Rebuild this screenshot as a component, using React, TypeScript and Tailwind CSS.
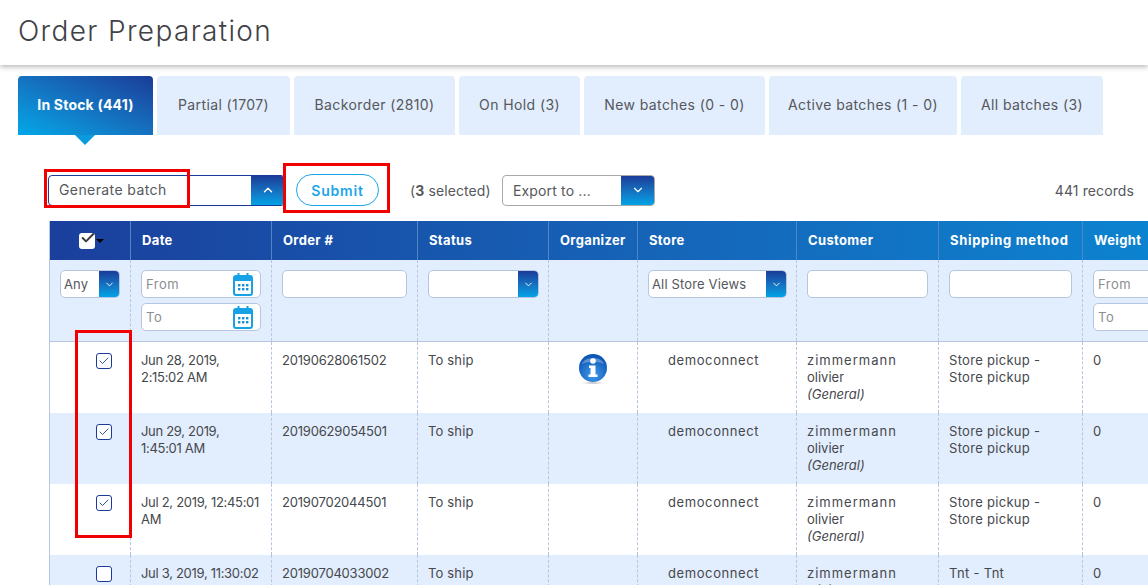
import { Check, ChevronDown, ChevronUp } from 'lucide-react';

const font = "[font-family:Inter,'Liberation_Sans',sans-serif]";

const tabs = [
    { label: 'Partial (1707)', w: 'w-[133px]' },
    { label: 'Backorder (2810)', w: 'w-[161px]' },
    { label: 'On Hold (3)', w: 'w-[121px]' },
    { label: 'New batches (0 - 0)', w: 'w-[181px]' },
    { label: 'Active batches (1 - 0)', w: 'w-[188px]' },
    { label: 'All batches (3)', w: 'w-[142px]' },
];

const rows = [
    { checked: true, date: ['Jun 28, 2019,', '2:15:02 AM'], order: '20190628061502', info: true, ship: ['Store pickup -', 'Store pickup'] },
    { checked: true, date: ['Jun 29, 2019,', '1:45:01 AM'], order: '20190629054501', info: false, ship: ['Store pickup -', 'Store pickup'] },
    { checked: true, date: ['Jul 2, 2019, 12:45:01', 'AM'], order: '20190702044501', info: false, ship: ['Store pickup -', 'Store pickup'] },
    { checked: false, date: ['Jul 3, 2019, 11:30:02', 'AM'], order: '20190704033002', info: false, ship: ['Tnt - Tnt'] },
];

const headers = ['Date', 'Order #', 'Status', 'Organizer', 'Store', 'Customer', 'Shipping method', 'Weight'];

const CalendarIcon = () => (
    <svg width="20" height="24" viewBox="0 0 20 24" className="shrink-0">
        <rect x="1" y="4" width="18" height="19" rx="2" fill="#fff" stroke="#17a2e6" strokeWidth="2" />
        <rect x="1" y="4" width="18" height="5" fill="#17a2e6" />
        <rect x="4.5" y="1" width="2" height="5" fill="#17a2e6" />
        <rect x="13.5" y="1" width="2" height="5" fill="#17a2e6" />
        {[5, 9, 13].map(x => [12, 16].map(y => <rect key={`${x}-${y}`} x={x} y={y} width="2.4" height="2.4" fill="#1b8fd6" />))}
    </svg>
);

const InfoIcon = () => (
    <svg width="30" height="32" viewBox="0 0 30 32">
        <defs>
            <radialGradient id="infoBall" cx="50%" cy="75%" r="70%">
                <stop offset="0%" stopColor="#3f9bea" />
                <stop offset="100%" stopColor="#0b55b5" />
            </radialGradient>
            <radialGradient id="infoShadow">
                <stop offset="0%" stopColor="#999" />
                <stop offset="100%" stopColor="#fff" stopOpacity="0" />
            </radialGradient>
        </defs>
        <ellipse cx="15" cy="30" rx="15" ry="1.6" fill="url(#infoShadow)" />
        <circle cx="15" cy="15" r="14" fill="url(#infoBall)" />
        <path d="M4 11 C7 3 23 3 26 11 C20 8 10 8 4 11Z" fill="#fff" opacity="0.3" />
        <circle cx="15" cy="8" r="2.8" fill="#fff" />
        <path d="M11 12.5h6.5v9h2v2.5h-9v-2.5h2v-6.500h-1.500z" fill="#fff" />
    </svg>
);

const SelectArrow = ({ up = false, wide = false }: { up?: boolean; wide?: boolean }) => (
    <span className={`flex h-full items-center justify-center bg-gradient-to-b from-[#1a3c98] to-[#00a3e6] text-white ${wide ? 'w-[33px]' : 'w-[20px]'}`}>
        {up ? <ChevronUp size={14} strokeWidth={2.5} /> : <ChevronDown size={wide ? 14 : 11} strokeWidth={2} />}
    </span>
);

const FilterSelect = ({ label, w }: { label?: string; w: string }) => (
    <div className={`flex h-[28px] items-center justify-between overflow-hidden rounded-[5px] border border-[#b5c6de] bg-white ${w}`}>
        <span className="truncate pl-[3px] text-[13px] tracking-[0.15px] text-[#55585c]">{label}</span>
        <SelectArrow />
    </div>
);

const FilterInput = ({ placeholder, w, calendar = false }: { placeholder?: string; w: string; calendar?: boolean }) => (
    <div className={`flex h-[28px] items-center justify-between rounded-[5px] border border-[#b5c6de] bg-white pl-[4px] pr-[7px] ${w}`}>
        <span className="text-[13px] tracking-[0.5px] text-[#8a8d91]">{placeholder}</span>
        {calendar && <CalendarIcon />}
    </div>
);

const cellBase = 'border-l border-dashed border-[#b5c6de] align-top';

const App = () => {
    return (
        <div className={`relative h-[585px] w-[1148px] overflow-hidden bg-white text-[#45484c] ${font}`}>
            <header className="flex h-[65px] items-center pb-[3px] pl-[18px] shadow-[0_2px_5px_rgba(0,0,0,0.28)]">
                <h1 className="text-[28px] font-[350] tracking-[1.35px] text-[#3f4246]">Order Preparation</h1>
            </header>

            {/* Tabs */}
            <div className="mt-[11px] flex gap-[4px] pl-[18px]">
                <div className="relative flex h-[59px] w-[135px] items-center justify-center rounded-t-[4px] bg-gradient-to-tr from-[#00a8e8] to-[#1a3c98] pb-[2px] text-[14px] font-bold tracking-[0.2px] text-white">
                    In Stock (441)
                    <span className="absolute -bottom-[10px] left-[57px] h-0 w-0 border-x-[10px] border-t-[10px] border-x-transparent border-t-[#0a9bdf]"></span>
                </div>
                {tabs.map(tab => (
                    <div key={tab.label} className={`flex h-[59px] items-center justify-center rounded-t-[4px] bg-[#e2edfd] pb-[2px] text-[14px] tracking-[0.4px] text-[#55585c] ${tab.w}`}>
                        {tab.label}
                    </div>
                ))}
            </div>

            {/* Toolbar */}
            <div className="mt-[39px] flex h-[32px] items-center pl-[48px] pr-[14px]">
                <div className="flex h-[31px] w-[237px] items-center justify-between overflow-hidden rounded-[4px] border border-[#1a3c98] bg-white">
                    <span className="pb-[2px] pl-[10px] text-[14px] tracking-[0.4px] text-[#55585c]">Generate batch</span>
                    <SelectArrow up wide />
                </div>
                <button className="ml-[11px] h-[32px] w-[83px] rounded-full border border-[#1ba6e8] text-[14px] font-semibold tracking-[0.8px] text-[#1ba6e8]">Submit</button>
                <span className="ml-[31px] w-[92px] whitespace-nowrap text-[14px] tracking-[0.1px] text-[#55585c]">(<b>3</b> selected)</span>
                <div className="flex h-[31px] w-[153px] items-center justify-between overflow-hidden rounded-[4px] border border-[#a9a9a9] bg-white">
                    <span className="pl-[10px] text-[14px] tracking-[0.15px] text-[#55585c]">Export to ...</span>
                    <SelectArrow wide />
                </div>
                <span className="ml-auto text-[14px] tracking-[0.1px] text-[#55585c]">441 records</span>
            </div>

            {/* Grid */}
            <table className="mt-[15px] ml-[49px] w-[1150px] table-fixed border-collapse border-l border-[#b5c6de] text-[13px] leading-[17px]">
                <colgroup>
                    <col className="w-[81px]" />
                    <col className="w-[141px]" />
                    <col className="w-[146px]" />
                    <col className="w-[131px]" />
                    <col className="w-[89px]" />
                    <col className="w-[159px]" />
                    <col className="w-[142px]" />
                    <col className="w-[144px]" />
                    <col className="w-[117px]" />
                </colgroup>
                <thead>
                    <tr className="h-[39px] bg-gradient-to-r from-[#1a3f9c] to-[#0a86d2] text-left text-white">
                        <th className="p-0">
                            <div className="flex items-center pl-[29px]">
                                <span className="relative flex h-[16px] w-[16px] items-center justify-center rounded-[3px] bg-white">
                                    <Check size={16} strokeWidth={3} className="absolute -top-[3px] left-[1px] text-[#3d3d3d]" />
                                </span>
                                <span className="ml-[1px] h-0 w-0 border-x-[4px] border-t-[4px] border-x-transparent border-t-black"></span>
                            </div>
                        </th>
                        {headers.map(h => (
                            <th key={h} className={`whitespace-nowrap border-l border-[#4f86c6] pl-[11px] text-[13px] font-bold ${h === 'Shipping method' ? 'tracking-[0.7px]' : 'tracking-[0.35px]'}`}>{h}</th>
                        ))}
                    </tr>
                </thead>
                <tbody>
                    <tr className="h-[81px] border-b border-[#b5c6de] bg-[#e2edfd]">
                        <td className="pl-[10px] pt-[10px] align-top"><FilterSelect label="Any" w="w-[60px]" /></td>
                        <td className={`${cellBase} pl-[10px] pt-[10px]`}>
                            <div className="flex flex-col gap-[5px]">
                                <FilterInput placeholder="From" w="w-[120px]" calendar />
                                <FilterInput placeholder="To" w="w-[120px]" calendar />
                            </div>
                        </td>
                        <td className={`${cellBase} pl-[10px] pt-[10px]`}><FilterInput w="w-[125px]" /></td>
                        <td className={`${cellBase} pl-[10px] pt-[10px]`}><FilterSelect w="w-[111px]" /></td>
                        <td className={cellBase}></td>
                        <td className={`${cellBase} pl-[10px] pt-[10px]`}><FilterSelect label="All Store Views" w="w-[139px]" /></td>
                        <td className={`${cellBase} pl-[10px] pt-[10px]`}><FilterInput w="w-[121px]" /></td>
                        <td className={`${cellBase} pl-[10px] pt-[10px]`}><FilterInput w="w-[123px]" /></td>
                        <td className={`${cellBase} pl-[10px] pt-[10px]`}>
                            <div className="flex flex-col gap-[5px]">
                                <FilterInput placeholder="From" w="w-[100px]" />
                                <FilterInput placeholder="To" w="w-[100px]" />
                            </div>
                        </td>
                    </tr>
                    {rows.map((row, i) => (
                        <tr key={row.order} className={`${i === 0 ? 'h-[71.5px]' : 'h-[71px]'} ${i % 2 === 1 ? 'bg-[#e2edfd]' : 'bg-white'}`}>
                            <td className="pl-[46px] pt-[11px] align-top">
                                <span className="flex h-[16px] w-[16px] items-center justify-center rounded-[3px] border border-[#1a3c98] bg-white text-[#1a3c98]">
                                    {row.checked && <Check size={12} strokeWidth={1.75} />}
                                </span>
                            </td>
                            <td className={`${cellBase} whitespace-nowrap px-[10px] pt-[10px] tracking-[-0.3px]`}>{row.date[0]}<br />{row.date[1]}</td>
                            <td className={`${cellBase} px-[10px] pt-[10px] tracking-[-0.2px]`}>{row.order}</td>
                            <td className={`${cellBase} px-[10px] pt-[10px] tracking-[0.15px]`}>To ship</td>
                            <td className={`${cellBase} pt-[11px]`}>
                                {row.info && <div className="flex justify-center"><InfoIcon /></div>}
                            </td>
                            <td className={`${cellBase} pl-[30px] pt-[10px] tracking-[0.6px]`}>democonnect</td>
                            <td className={`${cellBase} px-[10px] pt-[10px]`}><span className="tracking-[1px]">zimmermann</span><br />olivier<br /><i>(General)</i></td>
                            <td className={`${cellBase} px-[10px] pt-[10px] tracking-[0.3px]`}>{row.ship.map(s => <div key={s}>{s}</div>)}</td>
                            <td className={`${cellBase} px-[10px] pt-[10px]`}>0</td>
                        </tr>
                    ))}
                </tbody>
            </table>

            {/* Annotation rectangles */}
            <div className="absolute left-[44px] top-[169px] h-[39px] w-[146px] border-[3px] border-[#f00000]"></div>
            <div className="absolute left-[283px] top-[163px] h-[50px] w-[107px] border-[3px] border-[#f00000]"></div>
            <div className="absolute left-[75px] top-[330px] h-[208px] w-[57px] border-[3px] border-[#f00000]"></div>
        </div>
    );
};

export default App;
